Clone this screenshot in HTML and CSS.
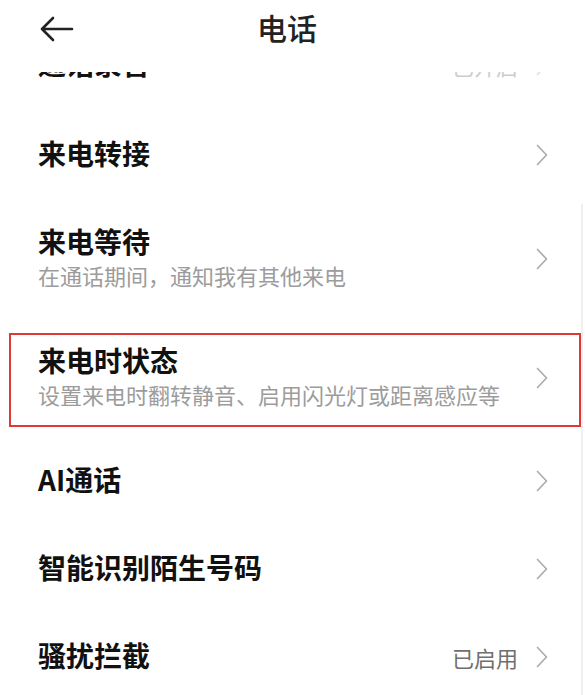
FILE: index.html
```html
<!DOCTYPE html>
<html lang="zh-CN">
<head>
<meta charset="utf-8">
<title>电话</title>
<link rel="stylesheet" href="styles.css">
</head>
<body>
<div class="page">
  <header class="topbar">
    <div class="back">
      <svg width="36" height="28" viewBox="0 0 36 28" aria-hidden="true">
        <path d="M3 13 H33 M14 2 L3 13 L14 24" fill="none" stroke="#222" stroke-width="2.6" stroke-linecap="round" stroke-linejoin="round"/>
      </svg>
    </div>
    <h1 class="title">电话</h1>
    <div class="spacer"></div>
  </header>

  <main class="list">
    <div class="row row-cut">
      <div class="texts"><div class="row-title">通话录音</div></div>
      <div class="trail faint"><span class="value">已开启</span><svg class="chev" viewBox="0 0 12 22" aria-hidden="true"><path d="M1.5 1.5 L10.5 11 L1.5 20.5"/></svg></div>
    </div>

    <div class="row">
      <div class="texts"><div class="row-title">来电转接</div></div>
      <div class="trail"><svg class="chev" viewBox="0 0 12 22" aria-hidden="true"><path d="M1.5 1.5 L10.5 11 L1.5 20.5"/></svg></div>
    </div>

    <div class="row row-double">
      <div class="texts">
        <div class="row-title">来电等待</div>
        <div class="row-sub">在通话期间，通知我有其他来电</div>
      </div>
      <div class="trail"><svg class="chev" viewBox="0 0 12 22" aria-hidden="true"><path d="M1.5 1.5 L10.5 11 L1.5 20.5"/></svg></div>
    </div>

    <div class="row row-double highlighted">
      <div class="texts">
        <div class="row-title">来电时状态</div>
        <div class="row-sub">设置来电时翻转静音、启用闪光灯或距离感应等</div>
      </div>
      <div class="trail"><svg class="chev" viewBox="0 0 12 22" aria-hidden="true"><path d="M1.5 1.5 L10.5 11 L1.5 20.5"/></svg></div>
      <div class="mark"></div>
    </div>

    <div class="row">
      <div class="texts"><div class="row-title">AI通话</div></div>
      <div class="trail"><svg class="chev" viewBox="0 0 12 22" aria-hidden="true"><path d="M1.5 1.5 L10.5 11 L1.5 20.5"/></svg></div>
    </div>

    <div class="row">
      <div class="texts"><div class="row-title">智能识别陌生号码</div></div>
      <div class="trail"><svg class="chev" viewBox="0 0 12 22" aria-hidden="true"><path d="M1.5 1.5 L10.5 11 L1.5 20.5"/></svg></div>
    </div>

    <div class="row">
      <div class="texts"><div class="row-title">骚扰拦截</div></div>
      <div class="trail"><span class="value">已启用</span><svg class="chev" viewBox="0 0 12 22" aria-hidden="true"><path d="M1.5 1.5 L10.5 11 L1.5 20.5"/></svg></div>
    </div>
  </main>
  <div class="scrollbar"></div>
</div>
</body>
</html>
```

FILE: styles.css
```css
html, body {
  margin: 0;
  padding: 0;
  background: #ffffff;
}

body {
  font-family: "Noto Sans CJK SC", "Noto Sans", "Liberation Sans", sans-serif;
  color: #111;
  width: 585px;
  height: 695px;
  overflow: hidden;
}

.page {
  position: relative;
  display: flex;
  flex-direction: column;
  height: 695px;
}

.topbar {
  position: relative;
  z-index: 2;
  height: 72px;
  flex: 0 0 72px;
  background: #fff;
  display: grid;
  grid-template-columns: 1fr auto 1fr;
  align-items: center;
  padding: 0 11px 18px 0;
  box-sizing: border-box;
}

.back {
  padding: 6px 0 0 39px;
  display: flex;
  align-items: center;
}

.back svg {
  display: block;
}

.title {
  margin: 0;
  font-size: 30px;
  font-weight: 500;
  line-height: 40px;
  color: #222;
}

.list {
  flex: 1 1 auto;
  overflow: hidden;
  display: flex;
  flex-direction: column;
}

.row {
  position: relative;
  flex: 0 0 88px;
  height: 88px;
  display: flex;
  align-items: center;
  justify-content: space-between;
  padding: 0 37px 4px 38px;
  box-sizing: border-box;
}

.row-cut {
  flex: 0 0 93px;
  height: 93px;
  margin-top: -54px;
}

.row-double {
  flex: 0 0 119px;
  height: 119px;
}

.texts {
  display: flex;
  flex-direction: column;
}

.row-title {
  font-size: 28px;
  font-weight: 700;
  line-height: 36px;
  color: #111;
}

.row-sub {
  font-size: 22px;
  line-height: 32px;
  color: #9c9c9c;
}

.trail {
  display: flex;
  align-items: center;
  gap: 18px;
  padding-top: 4px;
}

.trail.faint {
  opacity: 0.35;
}

.value {
  font-size: 22px;
  line-height: 30px;
  color: #6f6f6f;
}

.chev {
  display: block;
  width: 12px;
  height: 22px;
  fill: none;
  stroke: #acacac;
  stroke-width: 1.7;
  stroke-linecap: round;
  stroke-linejoin: round;
}

.mark {
  position: absolute;
  top: 15px;
  bottom: 10px;
  left: 9px;
  right: 4px;
  border: 2px solid #dd3a35;
  pointer-events: none;
}

.scrollbar {
  position: absolute;
  right: 2px;
  top: 204px;
  bottom: 0;
  width: 2px;
  background: #efefef;
}
```
